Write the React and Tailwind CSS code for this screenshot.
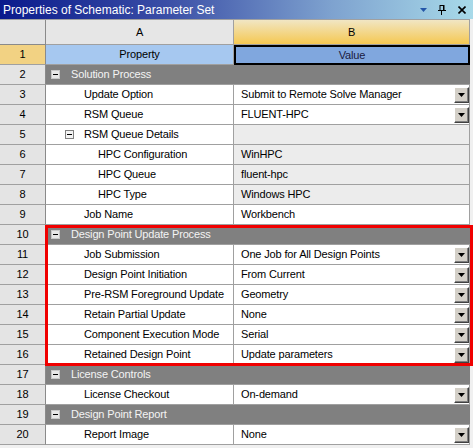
import React from "react";

const FONT = { fontFamily: '"Liberation Sans", Arial, sans-serif' };

function DropBtn() {
  return (
    <div className="w-[15px] h-[16px] bg-[#d4d0c8] border border-t-[#ffffff] border-l-[#ffffff] border-r-[#404040] border-b-[#404040] shadow-[inset_-1px_-1px_0_#808080] flex items-center justify-center shrink-0">
      <svg width="7" height="4" viewBox="0 0 7 4">
        <polygon points="0,0 7,0 3.5,4" fill="#000" />
      </svg>
    </div>
  );
}

function MinusBox({ cat }) {
  return (
    <div
      className={
        "w-[9px] h-[9px] border flex items-center justify-center shrink-0 " +
        (cat ? "border-[#c8c8c8] bg-[#e8e8e8]" : "border-[#808080] bg-[#f4f4f4]")
      }
    >
      <div className="w-[5px] h-[1px] bg-black" />
    </div>
  );
}

function NumCell({ n, active }) {
  return (
    <div
      className={
        "w-[46px] shrink-0 h-full flex items-center justify-center border-r border-r-[#8a8a8a] border-b border-b-[#a0a0a0] text-black " +
        (active ? "bg-[#f2d283]" : "bg-[#e4e4e4]")
      }
    >
      {n}
    </div>
  );
}

function CatRow({ n, label }) {
  return (
    <div className="flex h-[20px]">
      <NumCell n={n} />
      <div className="w-[424px] h-full bg-[#808080] border-b border-b-[#a0a0a0] flex items-center pl-[5px] text-[#f4f4f4]">
        <MinusBox cat />
        <span className="ml-[11px]">{label}</span>
      </div>
    </div>
  );
}

function PropRow({ n, label, level = 1, value = "", drop = false, ro = false, group = false }) {
  const pad = level === 1 ? "pl-[38px]" : level === 2 ? "pl-[52px]" : "pl-[19px]";
  return (
    <div className="flex h-[20px]">
      <NumCell n={n} />
      <div className={"w-[188px] h-full bg-white border-r border-b border-[#a0a0a0] flex items-center " + pad}>
        {group ? (
          <>
            <MinusBox />
            <span className="ml-[10px]">{label}</span>
          </>
        ) : (
          <span>{label}</span>
        )}
      </div>
      <div
        className={
          "w-[236px] h-full border-r border-b border-[#a0a0a0] flex items-center justify-between pl-[7px] " +
          (ro ? "bg-[#ececec]" : "bg-white")
        }
      >
        <span>{value}</span>
        {drop && <DropBtn />}
      </div>
    </div>
  );
}

export default function App() {
  return (
    <div
      className="w-[473px] h-[448px] bg-[#f0f0f0] text-[11px] tracking-[-0.15px] text-black overflow-hidden"
      style={FONT}
    >
      {/* Title bar */}
      <div className="h-[19px] flex items-center justify-between bg-[linear-gradient(to_right,#0a1a8c_0%,#3a4ea6_35%,#7ea2cf_70%,#a8dae9_100%)]">
        <span className="pl-[3px] text-[12px] tracking-[0px] text-white">Properties of Schematic: Parameter Set</span>
        <div className="flex items-center h-full">
          <svg width="7" height="4" viewBox="0 0 7 4" className="mr-[11px]">
            <polygon points="0,0 7,0 3.5,4" fill="#2456a8" />
          </svg>
          <svg width="8" height="10" viewBox="0 0 8 10" className="mr-[12px]">
            <rect x="2" y="0.5" width="4" height="5" fill="none" stroke="#000" />
            <rect x="5" y="0" width="1" height="6" fill="#000" />
            <rect x="0" y="5" width="8" height="1" fill="#000" />
            <rect x="3" y="6" width="1" height="4" fill="#000" />
          </svg>
          <svg width="8" height="8" viewBox="0 0 8 8" className="mr-[7px]">
            <path d="M0.5 0.5 L7.5 7.5 M7.5 0.5 L0.5 7.5" stroke="#000" strokeWidth="1.6" />
          </svg>
        </div>
      </div>

      <div className="w-[470px] border-t border-t-[#a0a0a0]">
        {/* Column header */}
        <div className="flex h-[25px]">
          <div className="w-[46px] h-full bg-[#e4e4e4] border-r border-r-[#8a8a8a] border-b border-b-[#8a8a8a]" />
          <div className="w-[188px] h-full bg-[#e6e6e6] border-r border-b border-[#a0a0a0] flex items-center justify-center">
            A
          </div>
          <div className="w-[236px] h-full bg-[linear-gradient(to_bottom,#f1e6c4,#f5c852)] border-r border-r-[#a0a0a0] border-b border-b-[#a0a0a0] flex items-center justify-center">
            B
          </div>
        </div>

        {/* Row 1 */}
        <div className="flex h-[20px]">
          <NumCell n={1} active />
          <div className="w-[188px] h-full bg-[#a6c8f0] border-r border-b border-[#a0a0a0] flex items-center justify-center">
            Property
          </div>
          <div className="w-[236px] h-full bg-[#80a7de] border-2 border-black flex items-center justify-center text-[#1a1a40]">
            Value
          </div>
        </div>

        <CatRow n={2} label="Solution Process" />
        <PropRow n={3} label="Update Option" value="Submit to Remote Solve Manager" drop />
        <PropRow n={4} label="RSM Queue" value="FLUENT-HPC" drop />
        <PropRow n={5} label="RSM Queue Details" level={0} group ro />
        <PropRow n={6} label="HPC Configuration" level={2} value="WinHPC" ro />
        <PropRow n={7} label="HPC Queue" level={2} value="fluent-hpc" ro />
        <PropRow n={8} label="HPC Type" level={2} value="Windows HPC" ro />
        <PropRow n={9} label="Job Name" value="Workbench" />

        <div className="relative w-[473px]">
          <CatRow n={10} label="Design Point Update Process" />
          <PropRow n={11} label="Job Submission" value="One Job for All Design Points" drop />
          <PropRow n={12} label="Design Point Initiation" value="From Current" drop />
          <PropRow n={13} label="Pre-RSM Foreground Update" value="Geometry" drop />
          <PropRow n={14} label="Retain Partial Update" value="None" drop />
          <PropRow n={15} label="Component Execution Mode" value="Serial" drop />
          <PropRow n={16} label="Retained Design Point" value="Update parameters" drop />
          <div className="absolute left-[45px] top-0 w-[428px] h-[141px] border-[3px] border-[#f00000] pointer-events-none" />
        </div>

        <CatRow n={17} label="License Controls" />
        <PropRow n={18} label="License Checkout" value="On-demand" drop />
        <CatRow n={19} label="Design Point Report" />
        <PropRow n={20} label="Report Image" value="None" drop />
      </div>
    </div>
  );
}
